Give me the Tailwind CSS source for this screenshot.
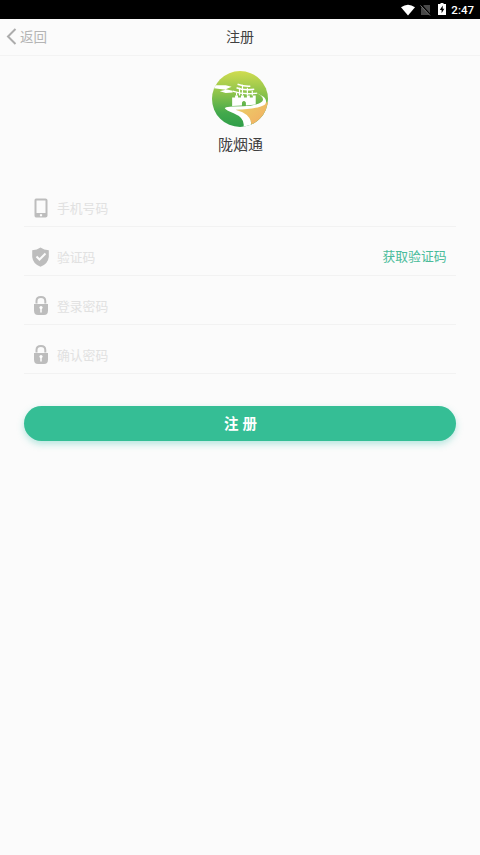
<!DOCTYPE html>
<html lang="zh-CN">
<head>
<meta charset="utf-8">
<meta name="viewport" content="width=device-width, initial-scale=1">
<title>注册</title>
<script src="https://cdn.jsdelivr.net/npm/@tailwindcss/browser@4"></script>
</head>
<body class="flex h-screen flex-col overflow-hidden bg-[#fbfbfb] font-['Noto_Sans_CJK_SC',sans-serif] text-[#404040]">
  <div class="flex h-[19px] shrink-0 items-center justify-end bg-black pr-[6px]">
    <svg class="h-[12px] w-[14px]" viewBox="0 0 14 12" fill="#fff"><path d="M0 3.2Q7-1.8 14 3.2L7 11.6Z"/></svg>
    <svg class="ml-[5px] h-[12px] w-[11px]" viewBox="0 0 11 12"><path d="M4 1h6v10H1V4Z" fill="#484848"/><path d="M1 .5 10.500 11" stroke="#000" stroke-width="1.500"/><path d="M.5 1.500 10 11.500" stroke="#777" stroke-width="1"/></svg>
    <svg class="ml-[7px] -mt-px h-[12px] w-[8px]" viewBox="0 0 8 12"><path d="M2.500 0h3v1H8v11H0V1h2.500Z" fill="#fff"/><path d="M4.700 2.500 1.800 7h1.800v3.200L6.300 5.800H4.700Z" fill="#000"/></svg>
    <span class="ml-[5px] mt-px font-[Roboto,sans-serif] text-[11.5px] font-medium leading-[18px] text-white">2:47</span>
  </div>

  <header class="grid h-[37px] shrink-0 grid-cols-3 items-center border-b border-[#f3f3f3] pb-[3px]">
    <div class="flex items-center pl-[6px] text-[13.5px] leading-5 text-[#b4b4b4]">
      <svg class="mt-[2px] h-[17px] w-[11px]" viewBox="0 0 11 17" fill="none" stroke="#acacac" stroke-width="2"><path d="M9.500 1 2 8.500 9.500 16"/></svg>
      <span class="ml-[3px]">返回</span>
    </div>
    <h1 class="text-center text-[14px] leading-5">注册</h1>
  </header>

  <main class="flex flex-col px-6">
    <div class="flex flex-col items-center pt-[15px]">
      <svg class="size-[56px]" viewBox="0 0 57 57">
        <defs>
          <linearGradient id="sky" x1="0" y1="0" x2="0" y2="1"><stop offset="0" stop-color="#d0dc50"/><stop offset=".4" stop-color="#8cc34b"/><stop offset=".75" stop-color="#43a94c"/><stop offset="1" stop-color="#2f9e49"/></linearGradient>
          <linearGradient id="sand" x1="0" y1="0" x2="1" y2="1"><stop offset="0" stop-color="#e8d468"/><stop offset="1" stop-color="#f5a962"/></linearGradient>
          <clipPath id="disc"><circle cx="28.500" cy="28.500" r="28.500"/></clipPath>
        </defs>
        <g clip-path="url(#disc)">
          <path d="M0 0h57v57H0Z" fill="url(#sky)"/>
          <path d="M0 14.500 14 14.500 20 16 14 18.500 21 20 21 22 14 22.500 8 20.500 14 19 2 17.500Z" fill="#fff"/>
          <path d="M22 39Q45 39 57 31V57H40Q42 47 22 39Z" fill="url(#sand)"/>
          <path d="M42 21Q55 26 51 31Q47 35 32 36Q14 36 13 38Q14 40 22 43Q34 48 32 57H40Q41 47 31 42L24 39.500Q48 38.500 54 34Q59 27 42 21Z" fill="#fff"/>
          <path d="M20.500 27h3v-2h3v2h3v-2h3v2h3v-2h3v2h3v-2h3v9l-10 1v-3q-2-3-4 0v3l-10 .5Z" fill="#fff"/>
          <g fill="none" stroke="#fff" stroke-width="1.500"><path d="M26 13.500Q33 16 39 15.500M25 17Q32 20 43 18.500M21 20.500Q32 24.500 46 22.500"/><path d="M31 14v11M28 17v8M36 17v8M25 22v3M41 20v5" stroke-width="1.200"/></g>
        </g>
      </svg>
      <div class="mt-[6px] pl-px text-[15px] leading-[22px]">陇烟通</div>
    </div>

    <form class="mt-[23px] text-[12.8px] leading-5 text-[#e1e1e1]">
      <div class="flex h-[49px] items-center border-b border-[#f2f2f2] pl-2 pt-[11px]">
        <svg class="h-[20px] w-[17px]" viewBox="0 0 17 20"><path fill="#bdbdbd" fill-rule="evenodd" d="M4 .5h9.500Q15.500 .5 15.500 2.300V17.700Q15.500 19.500 13.500 19.500H4Q2.500 19.500 2.500 17.700V2.300Q2.500 .5 4 .5ZM4.500 2.500V15H13.500V2.500ZM9 16a1.200 1.200 0 1 0 .01 0Z"/></svg>
        <span class="ml-2">手机号码</span>
      </div>
      <div class="flex h-[49px] items-center border-b border-[#f2f2f2] pl-2 pt-[11px]">
        <svg class="h-[20px] w-[17px]" viewBox="0 0 17 20"><path fill="#bdbdbd" d="M8.500 .5Q12 3 16.800 3.200V10Q16 17 8.500 19.700Q1 17 .2 10V3.200Q5 3 8.500 .5Z"/><path d="m4.500 9.500 3 3 6-6" fill="none" stroke="#fbfbfb" stroke-width="2"/></svg>
        <span class="ml-2">验证码</span>
        <span class="ml-auto mr-[9.5px] -mt-px text-[#4abb9a]">获取验证码</span>
      </div>
      <div class="flex h-[49px] items-center border-b border-[#f2f2f2] pl-2 pt-[11px]">
        <svg class="h-[20px] w-[17px]" viewBox="0 0 17 20"><path d="M4.500 7.500V5Q4.500 1 8.900 1T13.300 5V7.500" fill="none" stroke="#bdbdbd" stroke-width="2"/><path fill="#bdbdbd" d="M2 8h14v6.500q0 4.500-4 4.500h-6q-4 0-4-4.500Z"/><circle cx="9" cy="11.500" r="1.600" fill="#fff"/><path d="M9 12v4.500" stroke="#fff" stroke-width="1.500"/></svg>
        <span class="ml-2">登录密码</span>
      </div>
      <div class="flex h-[49px] items-center border-b border-[#f2f2f2] pl-2 pt-[11px]">
        <svg class="h-[20px] w-[17px]" viewBox="0 0 17 20"><path d="M4.500 7.500V5Q4.500 1 8.900 1T13.300 5V7.500" fill="none" stroke="#bdbdbd" stroke-width="2"/><path fill="#bdbdbd" d="M2 8h14v6.500q0 4.500-4 4.500h-6q-4 0-4-4.500Z"/><circle cx="9" cy="11.500" r="1.600" fill="#fff"/><path d="M9 12v4.500" stroke="#fff" stroke-width="1.500"/></svg>
        <span class="ml-2">确认密码</span>
      </div>
      <button type="button" class="mt-[32px] flex h-[35px] w-full items-center justify-center rounded-full bg-[#35be95] pl-[5px] pb-px text-[14.5px] font-bold tracking-[4px] text-white shadow-[0_3px_7px_rgba(53,190,170,0.35)]">注册</button>
    </form>
  </main>
</body>
</html>
